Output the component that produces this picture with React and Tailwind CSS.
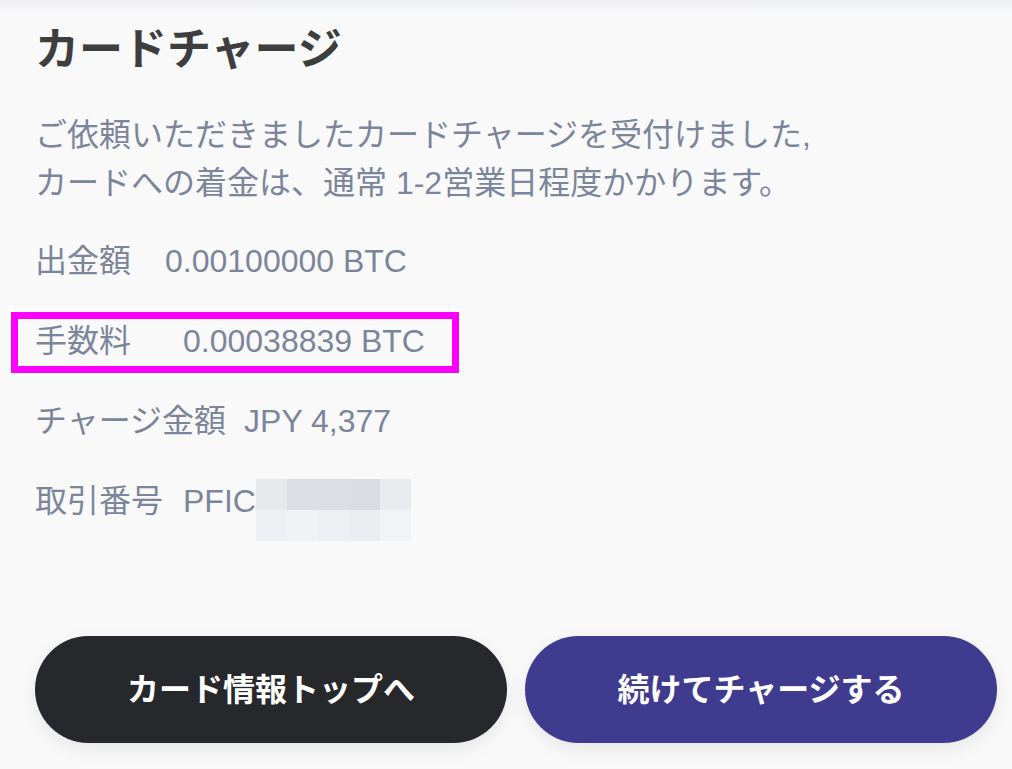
import React from 'react';

const rows = [
  { label: '出金額', value: '0.00100000 BTC', gap: 'ml-[34px]' },
  { label: '手数料', value: '0.00038839 BTC', gap: 'ml-[52px]', marked: true },
  { label: 'チャージ金額', value: 'JPY 4,377', gap: 'ml-[18px]' },
];

const blurTop = ['bg-[#e7e8ec]', 'bg-[#dcdee3]', 'bg-[#dcdee3]', 'bg-[#dadce1]', 'bg-[#e9eaee]'];
const blurBottom = ['bg-[#eeeff2]', 'bg-[#f0f1f3]', 'bg-[#eeeff2]', 'bg-[#eaecef]', 'bg-[#f2f3f5]'];

export default function App() {
  return (
    <div className="min-h-screen bg-[#f9f9fa] font-['Liberation_Sans','Noto_Sans_CJK_JP',sans-serif]">
      <div className="h-[13px] bg-gradient-to-b from-[#eeeff1] to-[#f9f9fa]" />
      <div className="pl-[35px] pr-[15px]">
        <h1 className="mt-[11px] text-[44px] leading-[52px] font-bold text-[#3e3e3e]">カードチャージ</h1>

        <p className="mt-[35px] text-[32px] leading-[48px] text-[#7c869b]">
          ご依頼いただきましたカードチャージを受付けました,
          <br />
          カードへの着金は、通常 1-2営業日程度かかります。
        </p>

        <div className="mt-[30px] flex flex-col gap-[32px] text-[32px] leading-[48px] text-[#7c869b]">
          {rows.map((r) => (
            <div key={r.label} className="relative flex">
              {r.marked && (
                <div className="absolute -left-[24px] -top-[5px] w-[448px] h-[61px] border-[7px] border-[#ff00ff] outline outline-[3px] outline-white" />
              )}
              <span>{r.label}</span>
              <span className={r.gap}>{r.value}</span>
            </div>
          ))}
          <div className="flex items-start">
            <span>取引番号</span>
            <span className="ml-[20px]">PFIC</span>
            <div className="mt-[2px] grid grid-cols-5 w-[155px] h-[62px]">
              {blurTop.map((c, i) => (
                <div key={'t' + i} className={c} />
              ))}
              {blurBottom.map((c, i) => (
                <div key={'b' + i} className={c} />
              ))}
            </div>
          </div>
        </div>

        <div className="mt-[95px] flex gap-[18px]">
          <button className="flex-1 h-[107px] rounded-full bg-[#27282c] text-white text-[32px] font-bold flex items-center justify-center shadow-[0_6px_18px_rgba(0,0,0,0.08)]">
            カード情報トップへ
          </button>
          <button className="flex-1 h-[107px] rounded-full bg-[#3f3b8f] text-white text-[32px] font-bold flex items-center justify-center shadow-[0_6px_18px_rgba(0,0,0,0.08)]">
            続けてチャージする
          </button>
        </div>
      </div>
    </div>
  );
}
